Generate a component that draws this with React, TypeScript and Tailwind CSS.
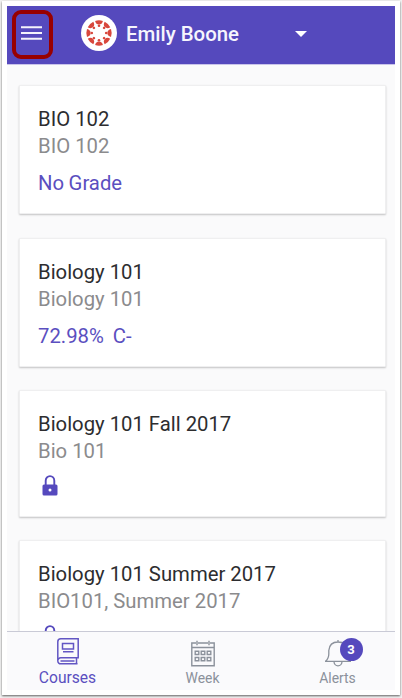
import type { ReactNode } from "react";

type Course = {
  name: string;
  code: string;
  grade?: string;
  className: string;
};

const courses: Course[] = [
  { name: "BIO 102", code: "BIO 102", grade: "No Grade", className: "mt-[20px] h-[129px]" },
  { name: "Biology 101", code: "Biology 101", grade: "72.98%\u00a0 C-", className: "mt-[24px] h-[129px]" },
  { name: "Biology 101 Fall 2017", code: "Bio 101", className: "mt-[23px] h-[127px]" },
  { name: "Biology 101 Summer 2017", code: "BIO101, Summer 2017", className: "mt-[23px] h-[127px]" },
];

const LockIcon = () => (
  <svg width="16" height="21" viewBox="0 0 16 21" className="ml-[4px]">
    <path d="M3.7 10V5.8a4.3 4.7 0 0 1 8.6 0V10" fill="none" stroke="#5549bd" strokeWidth="1.9" />
    <rect x="0.5" y="9.4" width="15" height="11" rx="1.5" fill="#5549bd" />
    <circle cx="8" cy="15" r="1.5" fill="white" />
  </svg>
);

const CanvasLogo = () => (
  <svg width="36" height="36" viewBox="-18 -18 36 36">
    <circle r="18" fill="white" />
    {[0, 45, 90, 135, 180, 225, 270, 315].map((angle) => (
      <g key={angle} transform={`rotate(${angle})`} fill="#d8473c">
        <path d="M-3.9 -12Q0 -13.3 3.9 -12Q3.1 -8.4 0 -8.4Q-3.1 -8.4 -3.9 -12Z" />
        <circle cy="-7.2" r="1.3" />
      </g>
    ))}
  </svg>
);

const CourseCard = ({ name, code, grade, className }: Course) => (
  <article
    className={`shrink-0 rounded-[1px] border border-[#efeff0] bg-white pl-[18px] pt-[20px] text-[20.3px] leading-[27px] shadow-[0_1px_2px_rgba(0,0,0,0.22)] ${className}`}
  >
    <h2 className="text-[#2d2d2f]">{name}</h2>
    <p className="text-[#8b8b8d]">{code}</p>
    {grade ? (
      <p className="mt-[10px] text-[#5b4fc0] [word-spacing:-0.5px]">{grade}</p>
    ) : (
      <div className="mt-[10px]">
        <LockIcon />
      </div>
    )}
  </article>
);

const Tab = ({ label, active = false, children }: { label: string; active?: boolean; children: ReactNode }) => (
  <button
    className={`flex w-[135px] shrink-0 flex-col items-center leading-[18px] ${
      active ? "pt-[6px] text-[15.6px] text-[#5b4fc0]" : "pt-[8px] text-[13.9px] text-[#8b919b]"
    }`}
  >
    <span className={`relative ${active ? "h-[31px]" : "h-[29px]"}`}>{children}</span>
    {label}
  </button>
);

export default function App() {
  return (
    <div className="h-[698px] w-[402px] overflow-hidden bg-[#f2f2f2] pl-[2px] pt-[1px] font-[Roboto,sans-serif]">
      <div className="flex h-[694px] w-[398px] flex-col bg-white px-[5px] pb-[5px] pt-[5px] shadow-[0_1px_2px_rgba(0,0,0,0.6)]">
        <header className="relative flex h-[58px] shrink-0 items-center bg-[#5549bd] pb-[4px]">
          <svg width="21" height="16" viewBox="0 0 21 16" className="ml-[14px]">
            <path d="M0 2.3h21M0 8h21M0 13.7h21" stroke="#f4f3fc" strokeWidth="2" />
          </svg>
          <div className="ml-[39px]">
            <CanvasLogo />
          </div>
          <span className="ml-[9px] mt-[2px] w-[114px] whitespace-nowrap text-[20.4px] font-medium text-[#f6f5fd]">
            Emily Boone
          </span>
          <svg width="12" height="6" viewBox="0 0 12 6" className="ml-[55px] mt-[1px]">
            <path d="M0 0h12L6 6Z" fill="white" />
          </svg>
          {/* Menu highlight */}
          <div className="absolute left-[5px] top-[4px] h-[49px] w-[41px] rounded-[9px] border-4 border-[#980000]" />
        </header>

        <main className="flex min-h-0 flex-1 flex-col overflow-hidden border-t border-[#c9c4ea] bg-[#fafafb] pl-[12px] pr-[9px]">
          {courses.map((course) => (
            <CourseCard key={course.name} {...course} />
          ))}
        </main>

        <nav className="h-[59px] shrink-0 overflow-hidden border-t border-[#c9cad6] bg-[#fafafc]">
          <div className="-ml-[7px] flex">
            <Tab label="Courses" active>
              <svg width="22" height="27" viewBox="0 0 22 27" fill="none" stroke="#6256c3" strokeWidth="1.5">
                <path d="M20.5 25.8H4A2.8 2.8 0 0 1 .8 23V3.8Q.8.8 3.8.8h17.4v19H4A3 3 0 0 0 .8 23" />
                <path d="M3.5 23h14M19.5 20v5.5" />
                <path d="M5.5 5.5h11V11h-11ZM6 13.8h10.5" />
              </svg>
            </Tab>
            <Tab label="Week">
              <svg width="24" height="27" viewBox="0 0 24 27" fill="none" stroke="#8b919b" strokeWidth="1.4">
                <path d="M5 3H.8v22.8h22.4V3H19M7 3h10M.8 7.5h22.4M6 .8v4.4M18 .8v4.4" />
                <path d="M4.2 11.2h3.6v3.3H4.2ZM10.2 11.2h3.6v3.3h-3.6ZM16.2 11.2h3.6v3.3h-3.6ZM4.2 17.5h3.6v3.3H4.2ZM10.2 17.5h3.6v3.3h-3.6ZM16.2 17.5h3.6v3.3h-3.6Z" />
              </svg>
            </Tab>
            <Tab label="Alerts">
              <svg width="26" height="27" viewBox="0 0 26 27" fill="none" stroke="#8b919b" strokeWidth="1.3">
                <path d="M13 0v2M.5 21.3Q3.8 18.5 3.8 14v-3.5Q4.5 2 13 2t9.2 8.5V14q0 4.5 3.3 7.3ZM9 21.5a4 4.3 0 0 0 8 0" />
              </svg>
              <span className="absolute left-[15px] top-[-2px] flex size-[23px] items-center justify-center rounded-full bg-[#5549bd] text-[13px] font-bold text-white">
                3
              </span>
            </Tab>
          </div>
        </nav>
      </div>
    </div>
  );
}
